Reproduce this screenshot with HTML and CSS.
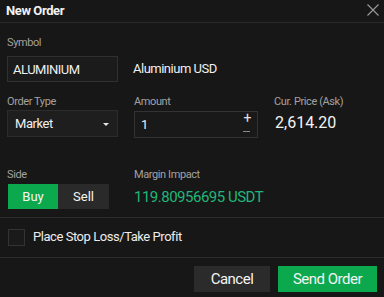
FILE: index.html
```html
<!DOCTYPE html>
<html>
<head>
<meta charset="utf-8">
<link rel="stylesheet" href="styles.css">
</head>
<body>
<div class="dialog">
  <div class="header">
    <span class="title">New Order</span>
    <svg class="close" width="12" height="12" viewBox="0 0 12 12"><path d="M0.5 0.5L11.5 11.5M11.5 0.5L0.5 11.5" stroke="#9a9a9a" stroke-width="1.1" fill="none"/></svg>
  </div>
  <div class="body">
    <div class="label first">Symbol</div>
    <div class="symbol-row">
      <div class="input symbol">ALUMINIUM</div>
      <div class="symbol-name">Aluminium USD</div>
    </div>
    <div class="grid row2">
      <div class="label">Order Type</div>
      <div class="label">Amount</div>
      <div class="label">Cur. Price (Ask)</div>
      <div class="input select">Market<span class="caret"></span></div>
      <div class="input amount">1
        <span class="steppers"><span class="plus">+</span><span class="minus"></span></span>
      </div>
      <div class="price">2,614.20</div>
    </div>
    <div class="grid row3">
      <div class="label">Side</div>
      <div class="label">Margin Impact</div>
      <div></div>
      <div class="side">
        <span class="seg buy">Buy</span>
        <span class="seg sell">Sell</span>
      </div>
      <div class="margin">119.80956695 USDT</div>
      <div></div>
    </div>
  </div>
  <div class="check-row">
    <span class="checkbox"></span>
    <span class="check-text">Place Stop Loss/Take Profit</span>
  </div>
  <div class="footer">
    <button class="btn cancel">Cancel</button>
    <button class="btn send">Send Order</button>
  </div>
</div>
</body>
</html>
```
FILE: styles.css
```css
html, body {
  margin: 0;
  padding: 0;
  background: #171717;
}
body {
  font-family: Roboto, "Liberation Sans", sans-serif;
  color: #ececec;
  width: 384px;
  height: 297px;
  overflow: hidden;
}
.header {
  height: 22px;
  border-bottom: 1px solid #2a2a2a;
  display: flex;
  align-items: center;
  justify-content: space-between;
  padding: 0 5px 0 6px;
}
.title {
  font-size: 13px;
  font-weight: 700;
  letter-spacing: -0.4px;
  color: #f2f2f2;
  line-height: 20px;
}
.close {
  margin-top: -2px;
}
.body {
  padding: 0 7px;
}
.label {
  font-size: 11px;
  line-height: 14px;
  letter-spacing: -0.4px;
  color: #a2a2a2;
}
.label.first {
  margin-top: 13px;
}
.symbol-row {
  display: flex;
  align-items: center;
  margin-top: 6px;
}
.input {
  box-sizing: border-box;
  background: #1b1b1b;
  border: 1px solid #303030;
  font-size: 13px;
  letter-spacing: -0.45px;
  color: #f0f0f0;
  display: flex;
  align-items: center;
  padding-left: 7px;
}
.symbol {
  width: 111px;
  height: 26px;
  padding-left: 5px;
  letter-spacing: -0.5px;
}
.symbol-name {
  margin-left: 15px;
  font-size: 13px;
  letter-spacing: -0.5px;
  color: #f0f0f0;
  margin-top: -2px;
}
.grid {
  display: grid;
  grid-template-columns: 111px 124px 1fr;
  column-gap: 16px;
}
.row2 {
  margin-top: 13px;
}
.row2 .label {
  margin-bottom: 1px;
}
.select {
  height: 27px;
  background: #1e1e1e;
  border-color: #2c2c2c;
  position: relative;
}
.caret {
  position: absolute;
  right: 8px;
  top: 12px;
  width: 0;
  height: 0;
  border-left: 3px solid transparent;
  border-right: 3px solid transparent;
  border-top: 3.5px solid #e6e6e6;
}
.amount {
  height: 27px;
  margin-top: 1px;
  position: relative;
  background: #191919;
  border-color: #333;
  padding-left: 6px;
}
.steppers {
  position: absolute;
  right: 7px;
  top: 0;
}
.plus {
  position: absolute;
  right: -1px;
  top: -1px;
  font-size: 14px;
  line-height: 14px;
  color: #e0e0e0;
}
.minus {
  position: absolute;
  right: 0;
  top: 19px;
  width: 7px;
  height: 1px;
  background: #8a8a8a;
}
.price {
  font-size: 16px;
  line-height: 19px;
  color: #f2f2f2;
  margin-top: 3px;
  margin-left: 1px;
}
.row3 {
  margin-top: 30px;
}
.row3 .label {
  margin-bottom: 2px;
}
.side {
  display: flex;
  height: 25px;
  margin-left: 1px;
}
.seg {
  width: 50px;
  display: flex;
  align-items: center;
  justify-content: center;
  font-size: 13px;
  color: #f4f4f4;
}
.buy {
  background: #0ba84e;
}
.sell {
  background: #2a2a2a;
  width: 51px;
}
.margin {
  font-size: 15px;
  letter-spacing: -0.5px;
  white-space: nowrap;
  color: #20b679;
  display: flex;
  align-items: center;
  margin-top: 1px;
}
.check-row {
  margin-top: 8px;
  border-top: 1px solid #2c2c2c;
  border-bottom: 1px solid #2c2c2c;
  height: 41px;
  display: flex;
  align-items: center;
  padding-left: 8px;
  box-sizing: border-box;
}
.checkbox {
  box-sizing: border-box;
  width: 17px;
  height: 17px;
  border: 1px solid #333;
  background: #1a1a1a;
  margin-top: -1px;
}
.check-text {
  margin-left: 8px;
  font-size: 13px;
  letter-spacing: -0.45px;
  color: #ededed;
  margin-top: -2px;
}
.footer {
  display: flex;
  justify-content: flex-end;
  gap: 8px;
  padding: 8px 7px 0 0;
}
.btn {
  border: none;
  height: 26px;
  font-family: Roboto, "Liberation Sans", sans-serif;
  font-size: 15px;
  letter-spacing: -0.5px;
  color: #f4f4f4;
  padding: 0;
}
.cancel {
  width: 76px;
  background: #2b2b2b;
}
.send {
  width: 99px;
  background: #0ba84e;
}
```
